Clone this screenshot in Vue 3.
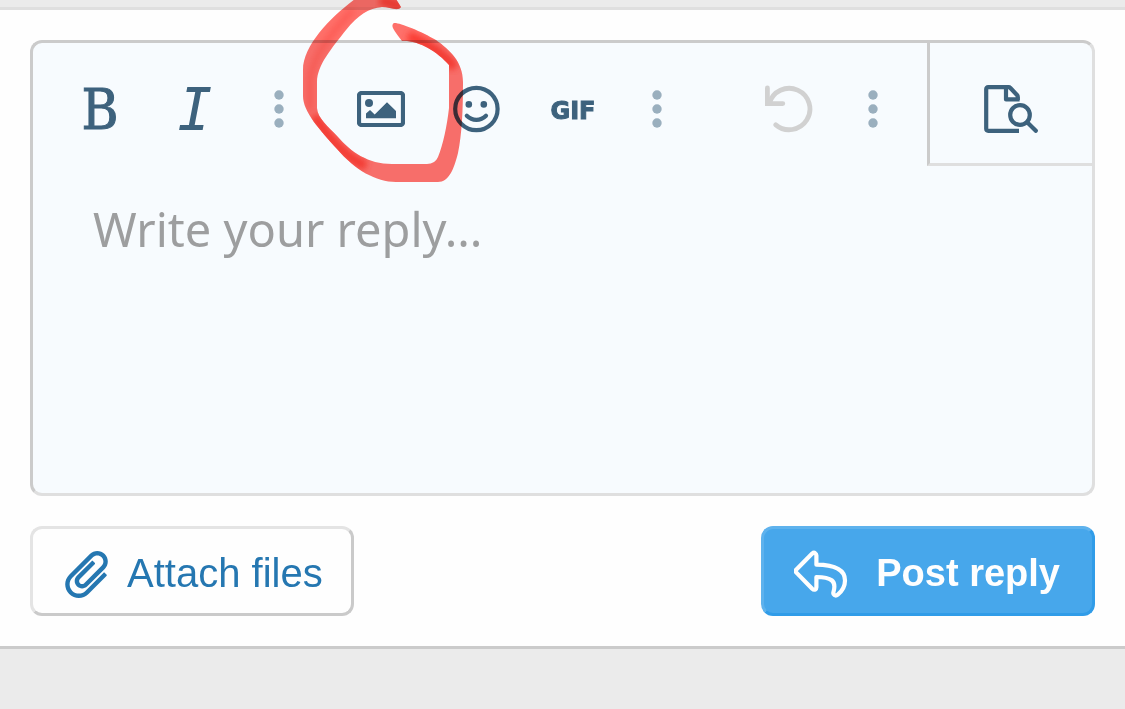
<script setup>
import { ref } from 'vue'

const reply = ref('')
</script>

<template>
  <main class="page">
    <form class="panel" @submit.prevent>
      <div class="editor">
        <div class="toolbar" role="toolbar" aria-label="Formatting">
          <div class="group">
            <button type="button" class="tool bold" aria-label="Bold">B</button>
            <button type="button" class="tool italic" aria-label="Italic">I</button>
            <button type="button" class="tool more" aria-label="More text options">
              <svg width="10" height="38" viewBox="0 0 10 38"><circle cx="5" cy="5" r="4.7" /><circle cx="5" cy="19" r="4.7" /><circle cx="5" cy="33" r="4.7" /></svg>
            </button>
          </div>
          <div class="group">
            <button type="button" class="tool" aria-label="Insert image">
              <svg width="48" height="36" viewBox="0 0 48 36">
                <rect class="line" x="2" y="2" width="44" height="32" rx="2.5" />
                <circle cx="12" cy="12" r="4" />
                <path d="M9 22.5 13 19l4.7 4.6L30 11.3 39 20v7.3H9z" />
              </svg>
            </button>
            <button type="button" class="tool" aria-label="Smilies">
              <svg width="48" height="48" viewBox="0 0 48 48">
                <circle class="line" cx="23.4" cy="24" r="21.2" />
                <circle cx="15.8" cy="19.4" r="3.3" /><circle cx="30.8" cy="19.4" r="3.3" />
                <path class="line" d="M13.8 30.8c5.400 5.400 13.800 5.400 19.200 0" />
              </svg>
            </button>
            <button type="button" class="tool gif">GIF</button>
            <button type="button" class="tool more" aria-label="More insert options">
              <svg width="10" height="38" viewBox="0 0 10 38"><circle cx="5" cy="5" r="4.7" /><circle cx="5" cy="19" r="4.7" /><circle cx="5" cy="33" r="4.7" /></svg>
            </button>
          </div>
          <div class="group end">
            <button type="button" class="tool undo" aria-label="Undo" disabled>
              <svg width="48" height="48" viewBox="0 0 48 48">
                <path class="line arc" d="M4.300 18.400A20.700 20.700 0 1 1 10.800 39.800" />
                <path class="line corner" d="M2.400 3v15.600h15.400" />
              </svg>
            </button>
            <button type="button" class="tool more" aria-label="More options">
              <svg width="10" height="38" viewBox="0 0 10 38"><circle cx="5" cy="5" r="4.7" /><circle cx="5" cy="19" r="4.7" /><circle cx="5" cy="33" r="4.7" /></svg>
            </button>
          </div>
          <button type="button" class="preview" aria-label="Preview">
            <svg width="54" height="48" viewBox="0 0 54 48">
              <path class="line butt" d="M35 45.800H4.200q-2 0-2-2V4.200q0-2 2-2h20.400q1 0 1.800.8l6.600 7q.8.900.8 2v3" />
              <path class="line butt" d="M22 3v11.400h13.600" />
              <circle class="line" cx="36" cy="30" r="9.8" />
              <path class="line" d="m43.200 37.200 8.600 8.600" />
            </svg>
          </button>
        </div>
        <textarea v-model="reply" aria-label="Reply" placeholder="Write your reply..."></textarea>
      </div>
      <div class="actions">
        <button type="button" class="action attach">
          <svg width="43" height="47" viewBox="24 0 464 512"><path d="M67.508 468.467c-58.005-58.013-58.016-151.92 0-209.943l225.011-225.04c44.643-44.645 117.279-44.645 161.92 0 44.743 44.749 44.753 117.186 0 161.944l-189.465 189.49c-31.41 31.413-82.518 31.412-113.926.001-31.479-31.482-31.49-82.453 0-113.944L311.51 110.491c4.687-4.687 12.286-4.687 16.972 0l16.967 16.971c4.685 4.686 4.685 12.283 0 16.969L184.983 304.917c-12.724 12.724-12.73 33.328 0 46.058 12.696 12.697 33.356 12.699 46.054-.001l189.465-189.489c25.987-25.989 25.994-68.06.001-94.056-25.931-25.934-68.119-25.932-94.049 0l-225.01 225.039c-39.249 39.252-39.258 102.795-.001 142.057 39.285 39.29 102.885 39.287 142.162-.028L439.497 238.49c4.686-4.687 12.282-4.684 16.969.004l16.967 16.971c4.685 4.686 4.689 12.279.004 16.965L277.556 468.426c-58.034 58.092-152.004 58.093-210.048.041z" /></svg>
          <span>Attach files</span>
        </button>
        <button type="submit" class="action post">
          <svg width="54" height="48" viewBox="0 0 54 48">
            <path class="line" d="M2.400 19.400 18.200 3.600Q19.800 2.200 21.200 3.200q1.200.7 1.200 2.200v9.300C41 14.900 51 20.200 51 30.500c0 6-3.100 10.800-7.200 14.100-2.500 2-5.200.2-4.300-2.700C42.800 30.500 37 27.200 22.400 27V37.200q0 1.700-1.200 2.300-1.500.7-3-.7L2.400 22.600q-1.500-1.600 0-3.200z" />
          </svg>
          <span>Post reply</span>
        </button>
      </div>
    </form>

    <svg class="marker" width="180" height="190" viewBox="290 0 180 190" aria-hidden="true">
      <defs>
        <filter id="soft" x="-20%" y="-20%" width="140%" height="140%"><feGaussianBlur stdDeviation="3" /></filter>
        <clipPath id="ring">
          <path d="M355-1C331 17 303 45 303 70V96C303 112 320 130 337 149 355 170 376 182 396 182H438C449 182 454 169 458 153 462 134 463 110 463 82 463 62 450 50 436 40 421 31 398 22 394 23 390 26 394 30 402 41 418 40 437 51 449 65V108C447 126 443 145 438 157Q435 164 427 164H392C368 164 351 152 338 137 328 126 318 119 317 108V82C317 65 332 48 346 30 358 15 369 8 382 7 390 7 398 12 401 7L396-1Z" />
        </clipPath>
      </defs>
      <g clip-path="url(#ring)">
        <path class="ink" d="M290-5h180v195H290z" />
        <path class="dense" d="M314 116Q340 156 366 166" />
        <path class="dense" d="M408 36Q437 47 455 68" />
        <path class="dense" d="M380 0 402 7" />
        <path class="dense faint" d="M353 10Q313 51 310 80v30" />
      </g>
    </svg>
  </main>
</template>

<style>
body {
  margin: 0;
  background: #ebebeb;
}
</style>

<style scoped>
.page {
  position: relative;
  padding-top: 7px;
  overflow: hidden;
  font-family: "Liberation Sans", Arial, sans-serif;
}
.panel {
  padding: 30px;
  background: #fefefe;
  border-top: 3px solid #dfdfdf;
  border-bottom: 3px solid #cbcbcb;
}
.editor {
  border: 3px solid;
  border-color: #cbcbcb #dfdfdf #dfdfdf #cbcbcb;
  border-radius: 12px;
  background: #f7fbfe;
  overflow: hidden;
}
.toolbar {
  display: flex;
  align-items: flex-start;
  height: 132px;
}
.group {
  display: flex;
  height: 132px;
  padding-left: 18px;
}
.group.end {
  margin-left: auto;
  padding: 0 18px 0 0;
}
button {
  font-family: inherit;
  cursor: pointer;
}
.tool {
  display: flex;
  align-items: center;
  justify-content: center;
  width: 96px;
  padding: 0;
  border: 0;
  background: none;
  color: #3d627d;
}
.tool.more {
  width: 72px;
  color: #9aafbe;
}
.tool.undo {
  color: #d1d1d1;
}
.tool.bold {
  padding: 0 0 0 2px;
  font: 56px "DejaVu Serif Condensed", "DejaVu Serif", serif;
  -webkit-text-stroke: 1px currentColor;
}
.tool.italic {
  padding-top: 2px;
  font: italic 58px "DejaVu Sans Mono", monospace;
}
.tool.gif {
  padding-top: 4px;
  font: 700 24px "DejaVu Sans", sans-serif;
  -webkit-text-stroke: 1px currentColor;
}
svg {
  display: block;
  flex: none;
  fill: currentColor;
}
.line {
  fill: none;
  stroke: currentColor;
  stroke-width: 4.2;
  stroke-linecap: round;
  stroke-linejoin: round;
}
.line.butt {
  stroke-linecap: butt;
}
.line.arc {
  stroke-width: 4.8;
}
.line.corner {
  stroke-width: 4.8;
  stroke-linejoin: miter;
}
.preview {
  display: flex;
  align-items: center;
  justify-content: center;
  box-sizing: border-box;
  width: 165px;
  height: 123px;
  padding: 12px 0 0;
  border: solid;
  border-width: 0 0 3px 3px;
  border-color: #dfdfdf #dfdfdf #dfdfdf #cbcbcb;
  background: none;
  color: #3d627d;
}
textarea {
  display: block;
  box-sizing: border-box;
  width: 100%;
  height: 318px;
  padding: 18px 60px;
  border: 0;
  outline: 0;
  resize: none;
  background: none;
  color: #141414;
  font: 47px/72px "Noto Sans", sans-serif;
}
textarea::placeholder {
  color: #9d9e9f;
  opacity: 1;
}
.actions {
  display: flex;
  justify-content: space-between;
  margin-top: 30px;
}
.action {
  display: flex;
  align-items: center;
  height: 90px;
  padding: 6px 30px 0;
  border: 3px solid;
  border-radius: 12px;
  line-height: 48px;
}
.action span {
  padding-bottom: 2px;
}
.attach {
  gap: 19px;
  padding: 6px 28px 0 32px;
  background: #fefefe;
  border-color: #e4e4e4 #cacaca #cacaca #e4e4e4;
  color: #2577b1;
  font-size: 40px;
}
.post {
  gap: 28px;
  padding-right: 32px;
  background: #47a7eb;
  border-color: #5eb2ed #309ce8 #309ce8 #5eb2ed;
  color: #fefefe;
  font-size: 38px;
  font-weight: 700;
}
.marker {
  position: absolute;
  top: 0;
  left: 290px;
  pointer-events: none;
  mix-blend-mode: multiply;
}
.ink {
  fill: #ff706a;
}
.dense {
  fill: none;
  stroke: #fb3a30;
  stroke-width: 10;
  filter: url(#soft);
}
.faint {
  stroke-width: 6;
  opacity: 0.4;
}
</style>
